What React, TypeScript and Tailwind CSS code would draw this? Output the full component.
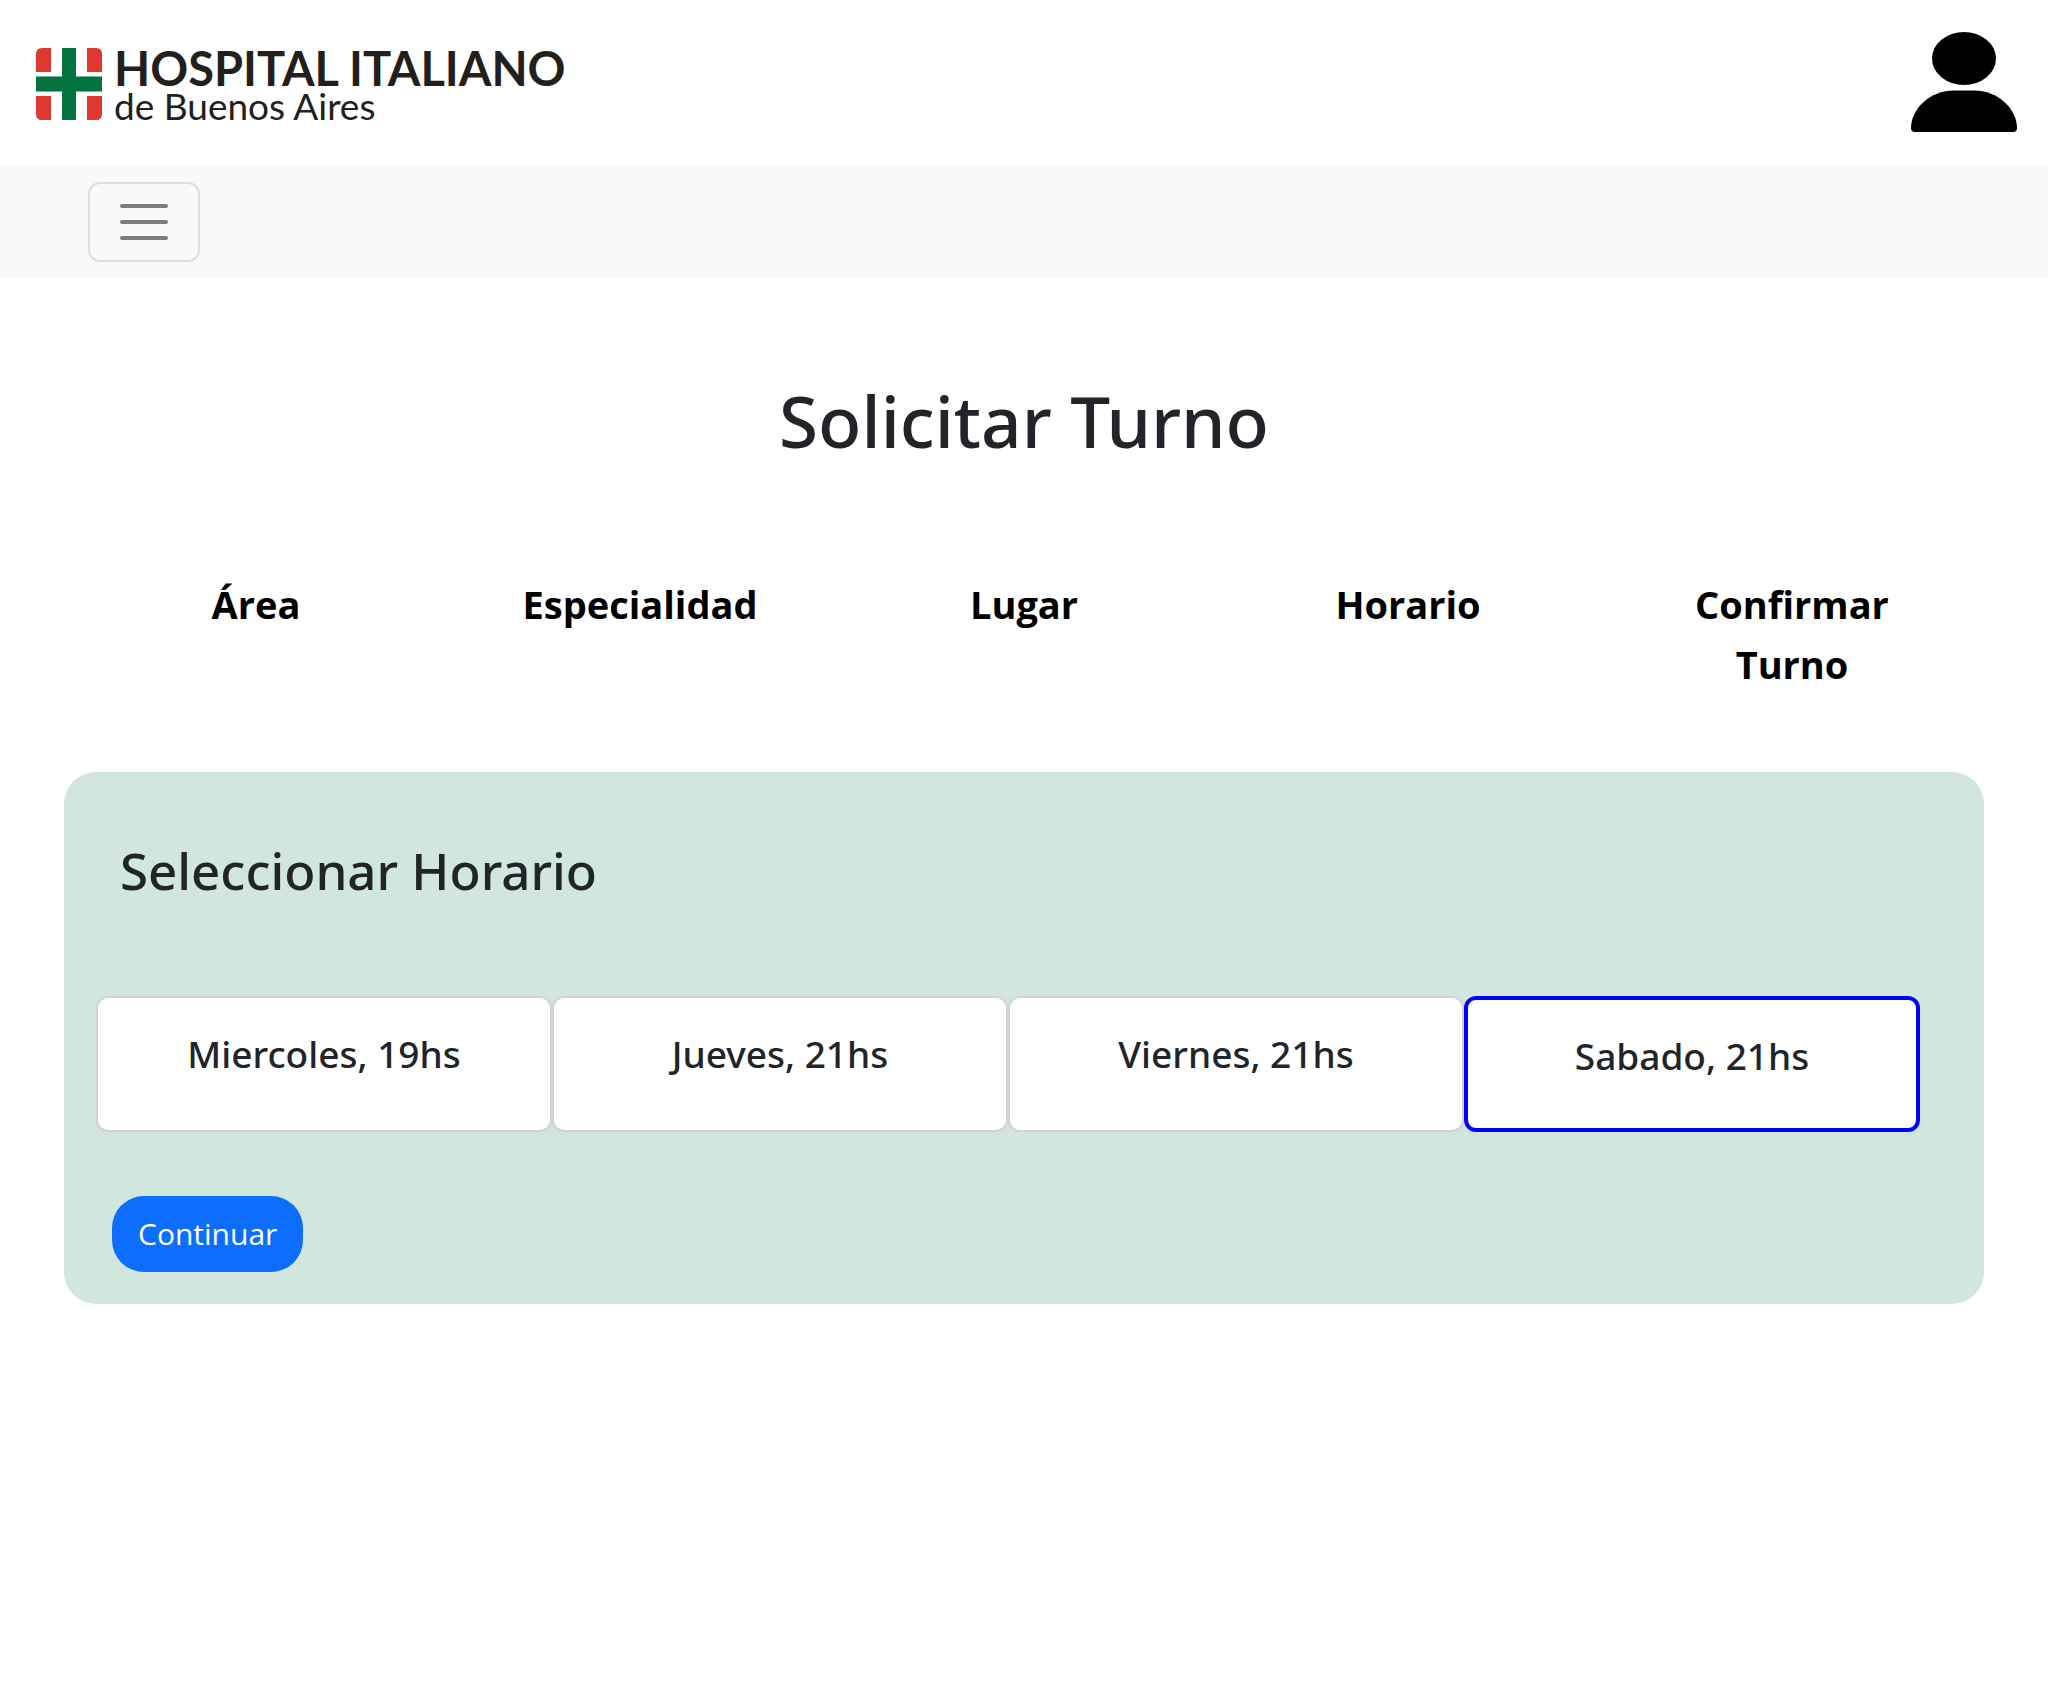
import { useState } from "react";

const steps = ["Área", "Especialidad", "Lugar", "Horario", "Confirmar Turno"];
const slots = ["Miercoles, 19hs", "Jueves, 21hs", "Viernes, 21hs", "Sabado, 21hs"];

function HospitalLogo() {
  return (
    <a href="#" className="flex items-start gap-3 text-[#231f1c]">
      <svg viewBox="0 0 66 72" className="h-[72px] w-[66px]" aria-hidden="true">
        <g fill="#de3831">
          <path d="M6 0H15V24H0V6Q0 0 6 0Z" />
          <path d="M51 0H60Q66 0 66 6V24H51Z" />
          <path d="M0 48H15V72H6Q0 72 0 66Z" />
          <path d="M51 48H66V66Q66 72 60 72H51Z" />
        </g>
        <path d="M26 0H40V28.500H66V43.500H40V72H26V43.500H0V28.500H26Z" fill="#03743e" />
      </svg>
      <span className="flex flex-col whitespace-nowrap font-[Lato,sans-serif]">
        <span className="text-[47px] leading-10 font-bold">HOSPITAL ITALIANO</span>
        <span className="text-[37px] leading-9">de Buenos Aires</span>
      </span>
    </a>
  );
}

export default function App() {
  const [selected, setSelected] = useState("Sabado, 21hs");

  return (
    <div className="min-h-screen bg-white font-['Noto_Sans','Open_Sans',sans-serif] text-[#212529]">
      <header className="flex items-start justify-between pr-[31px] pb-[34px] pl-9">
        <div className="pt-12">
          <HospitalLogo />
        </div>
        <button type="button" aria-label="Perfil" className="mt-8 text-black">
          <svg viewBox="0 0 106 100" className="h-[100px] w-[106px]" fill="currentColor" aria-hidden="true">
            <ellipse cx="53" cy="26.500" rx="32" ry="26.500" />
            <path d="M43 58.500H63C87 58.500 106 77 106 96Q106 100 102 100H4Q0 100 0 96C0 77 19 58.500 43 58.500Z" />
          </svg>
        </button>
      </header>

      <nav className="bg-[#f8f9fb] px-[88px] py-4">
        <button
          type="button"
          aria-label="Abrir menú"
          className="flex h-20 w-28 items-center justify-center rounded-xl border-2 border-[#dddee0]"
        >
          <svg viewBox="0 0 60 60" className="size-[60px]" stroke="#7c7d7e" strokeWidth="4" strokeLinecap="round" aria-hidden="true">
            <path d="M8 14H52M8 30H52M8 46H52" />
          </svg>
        </button>
      </nav>

      <main className="px-16 pt-24">
        <h1 className="text-center text-[71px] leading-[94px] font-medium">Solicitar Turno</h1>

        <ol className="mt-[106px] grid grid-cols-5 text-center font-['Open_Sans'] text-[38px] leading-[60px] font-bold text-black">
          {steps.map((step) => (
            <li key={step} className="px-12">
              {step}
            </li>
          ))}
        </ol>

        <section className="mt-[78px] rounded-[32px] bg-[#d1e7dd] px-8 pt-[66px] pb-8">
          <h2 className="px-6 text-[51px] leading-[64px] font-medium">Seleccionar Horario</h2>
          <div className="mt-[94px] mr-8 grid grid-cols-4">
            {slots.map((slot) => (
              <button
                key={slot}
                type="button"
                aria-pressed={slot === selected}
                onClick={() => setSelected(slot)}
                className={
                  "flex h-[136px] items-start justify-center rounded-xl bg-white pt-8 text-[37px] leading-[48px] font-medium " +
                  (slot === selected ? "border-4 border-[#0000ff]" : "border-2 border-[#d2d2d2]")
                }
              >
                {slot}
              </button>
            ))}
          </div>
          <button
            type="button"
            className="mt-16 ml-4 block rounded-[32px] bg-[#0d6efd] px-[26px] py-[14px] font-['Open_Sans'] text-[30px] leading-[48px] text-white"
          >
            Continuar
          </button>
        </section>
      </main>
    </div>
  );
}
